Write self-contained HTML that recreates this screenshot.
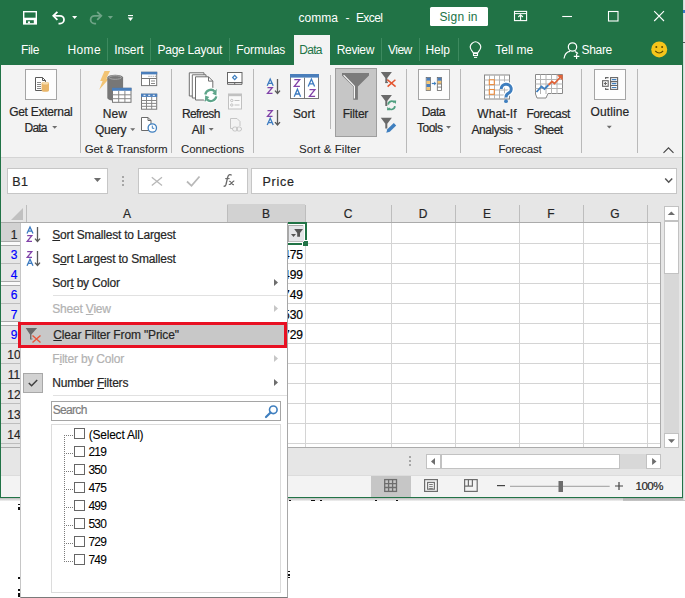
<!DOCTYPE html>
<html><head><meta charset="utf-8">
<style>
*{box-sizing:border-box;margin:0;padding:0}
html,body{width:685px;height:598px;overflow:hidden;background:#fff;font-family:"Liberation Sans",sans-serif;color:#262626}
.a{position:absolute}
.t{position:absolute;white-space:pre;line-height:1;-webkit-text-stroke-width:0.2px}
svg{position:absolute;overflow:visible}
</style></head><body>
<!-- window -->
<div class="a" style="left:0;top:0;width:683px;height:498px;background:#217346"></div>
<!-- title bar -->
<div class="t" style="-webkit-text-stroke-width:0;left:298.5px;top:12px;font-size:12px;letter-spacing:0.03px;color:#fff">comma</div>
<div class="t" style="-webkit-text-stroke-width:0;left:345.6px;top:12px;font-size:12px;color:#fff">-</div>
<div class="t" style="-webkit-text-stroke-width:0;left:355.9px;top:12px;font-size:12px;letter-spacing:-0.55px;color:#fff">Excel</div>
<svg style="left:0;top:0" width="685" height="35">
<!-- save -->
<rect x="23" y="11" width="14" height="13.6" fill="#fff"/>
<rect x="24.4" y="12.4" width="11.2" height="5.3" fill="#217346"/>
<rect x="26" y="20.2" width="7.8" height="3" fill="#217346"/>
<rect x="27.9" y="21.4" width="2.1" height="1.8" fill="#fff"/>
<!-- undo -->
<path d="M53.8,15.8 H60 A4,3.9 0 0 1 60,23.6 H58.5" fill="none" stroke="#fff" stroke-width="1.8"/>
<path d="M57.4,11.8 L53.3,15.8 L57.4,19.8" fill="none" stroke="#fff" stroke-width="1.8"/>
<polygon points="72.1,16 77.2,16 74.65,19" fill="#fff"/>
<!-- redo -->
<g opacity="0.35">
<path d="M100.8,15.8 H94.6 A4,3.9 0 0 0 94.6,23.6 H96.1" fill="none" stroke="#fff" stroke-width="1.8"/>
<path d="M97.2,11.8 L101.3,15.8 L97.2,19.8" fill="none" stroke="#fff" stroke-width="1.8"/>
<polygon points="107.8,16 113,16 110.4,19" fill="#fff"/>
</g>
<!-- customize -->
<rect x="128" y="15" width="5" height="1.1" fill="#fff"/>
<polygon points="127.8,17.6 133.2,17.6 130.5,21" fill="#fff"/>
<!-- ribbon display options -->
<rect x="514.5" y="11.4" width="12.1" height="9.2" fill="none" stroke="#fff" stroke-width="1.1"/>
<path d="M514.5,13.6 H526.6" stroke="#fff" stroke-width="1"/>
<path d="M520.6,14.6 V20.6 M518.3,17 L520.6,14.8 L522.9,17" fill="none" stroke="#fff" stroke-width="1.1"/>
<!-- min max close -->
<path d="M562.2,16.5 H572" stroke="#fff" stroke-width="1.1"/>
<rect x="608.5" y="11.5" width="9.5" height="9.5" fill="none" stroke="#fff" stroke-width="1.1"/>
<path d="M654.2,11.2 L664,21 M664,11.2 L654.2,21" stroke="#fff" stroke-width="1.1"/>
</svg>
<div class="a" style="left:430px;top:7px;width:58px;height:19px;background:#fff;border-radius:1.5px"></div>
<div class="t" style="-webkit-text-stroke-width:0;left:439.4px;top:11px;font-size:12px;letter-spacing:0.23px;color:#217346">Sign in</div>
<!-- tab separators -->
<svg style="left:0;top:0" width="685" height="65">
<g fill="#3d8a5f">
<rect x="107" y="38" width="1" height="23"/>
<rect x="150" y="38" width="1" height="23"/>
<rect x="229" y="38" width="1" height="23"/>
<rect x="381" y="38" width="1" height="23"/>
<rect x="419" y="38" width="1" height="23"/>
<rect x="458" y="38" width="1" height="23"/>
</g>
<!-- lightbulb -->
<path d="M473.3,52.8 L471.2,49.8 A5.1,5.1 0 1 1 479.8,49.8 L477.7,52.8 Z" fill="none" stroke="#fff" stroke-width="1.15"/>
<rect x="473.5" y="53.5" width="4" height="2" fill="none" stroke="#fff" stroke-width="1.1"/>
<path d="M474,57.4 H477.1" stroke="#fff" stroke-width="1"/>
<!-- share person -->
<circle cx="572.5" cy="47" r="4.2" fill="none" stroke="#fff" stroke-width="1.2"/>
<path d="M564,58.5 Q565,52 570,51.4" fill="none" stroke="#fff" stroke-width="1.2"/>
<path d="M575,51.6 Q577,52.3 578,53.6" fill="none" stroke="#fff" stroke-width="1.2"/>
<path d="M576.6,53.5 V59 M573.8,56.3 H579.4" stroke="#fff" stroke-width="1.2"/>
<!-- smiley -->
<circle cx="659.2" cy="49.4" r="8" fill="#f6c51b"/>
<circle cx="656.3" cy="47" r="1" fill="#5a4a00"/>
<circle cx="662.1" cy="47" r="1" fill="#5a4a00"/>
<path d="M655.3,51 Q659.2,55 663.1,51" fill="none" stroke="#5a4a00" stroke-width="1.1"/>
</svg>
<!-- tabs -->
<div class="a" style="left:294px;top:35px;width:36px;height:30px;background:#f3f3f3"></div>
<div class="t" style="-webkit-text-stroke-width:0;left:20.9px;top:44px;font-size:12px;letter-spacing:-0.3px;color:#fff">File</div>
<div class="t" style="-webkit-text-stroke-width:0;left:67.4px;top:44px;font-size:12px;letter-spacing:0.43px;color:#fff">Home</div>
<div class="t" style="-webkit-text-stroke-width:0;left:114.2px;top:44px;font-size:12px;letter-spacing:-0.12px;color:#fff">Insert</div>
<div class="t" style="-webkit-text-stroke-width:0;left:157.5px;top:44px;font-size:12px;letter-spacing:-0.26px;color:#fff">Page Layout</div>
<div class="t" style="-webkit-text-stroke-width:0;left:236.3px;top:44px;font-size:12px;letter-spacing:-0.14px;color:#fff">Formulas</div>
<div class="t" style="-webkit-text-stroke-width:0;left:299.3px;top:44px;font-size:12px;letter-spacing:-0.73px;color:#217346">Data</div>
<div class="t" style="-webkit-text-stroke-width:0;left:336.8px;top:44px;font-size:12px;letter-spacing:-0.36px;color:#fff">Review</div>
<div class="t" style="-webkit-text-stroke-width:0;left:387.9px;top:44px;font-size:12px;letter-spacing:-0.47px;color:#fff">View</div>
<div class="t" style="-webkit-text-stroke-width:0;left:425.5px;top:44px;font-size:12px;letter-spacing:-0.07px;color:#fff">Help</div>
<div class="t" style="-webkit-text-stroke-width:0;left:495.3px;top:44px;font-size:12px;letter-spacing:-0.02px;color:#fff">Tell me</div>
<div class="t" style="-webkit-text-stroke-width:0;left:581.6px;top:44px;font-size:12px;letter-spacing:-0.35px;color:#fff">Share</div>
<!-- ribbon -->
<div class="a" style="left:1px;top:65px;width:681px;height:93px;background:#f3f3f3;border-bottom:1px solid #d4d4d4"></div>
<!-- ribbon content -->
<svg style="left:0;top:0" width="685" height="160">
<rect x="80" y="69" width="1" height="84" fill="#b9b9b9"/>
<rect x="171" y="69" width="1" height="84" fill="#b9b9b9"/>
<rect x="253" y="69" width="1" height="84" fill="#b9b9b9"/>
<rect x="330" y="75" width="1" height="54" fill="#b9b9b9"/>
<rect x="406" y="69" width="1" height="84" fill="#b9b9b9"/>
<rect x="460" y="69" width="1" height="84" fill="#b9b9b9"/>
<rect x="581" y="69" width="1" height="84" fill="#b9b9b9"/>
<rect x="637" y="69" width="1" height="84" fill="#b9b9b9"/>
<polygon points="52.2,126 57.2,126 54.7,128.8" fill="#6d6d6d"/>
<polygon points="130.2,128.3 135.2,128.3 132.7,131.10000000000002" fill="#6d6d6d"/>
<polygon points="208.7,128 213.7,128 211.2,130.8" fill="#6d6d6d"/>
<polygon points="446,126 451,126 448.5,128.8" fill="#6d6d6d"/>
<polygon points="517,128 522,128 519.5,130.8" fill="#6d6d6d"/>
<polygon points="606.8,125.7 611.8,125.7 609.3,128.5" fill="#6d6d6d"/>
<rect x="25.5" y="69.5" width="31" height="30" fill="#fdfdfd" stroke="#a5a5a5"/>
<rect x="418.5" y="69.5" width="31" height="30" fill="#fdfdfd" stroke="#a5a5a5"/>
<rect x="594.5" y="69.5" width="31" height="30" fill="#fdfdfd" stroke="#a5a5a5"/>
<rect x="335.5" y="68.5" width="41" height="68" fill="#c6c6c6" stroke="#9e9e9e"/>
</svg>
<div class="t" style="left:9.2px;top:106px;font-size:12px;letter-spacing:-0.29px;color:#262626">Get External</div>
<div class="t" style="left:24.6px;top:122px;font-size:12px;letter-spacing:-0.87px;color:#262626">Data</div>
<div class="t" style="left:102.8px;top:108px;font-size:12px;letter-spacing:0.0px;color:#262626">New</div>
<div class="t" style="left:95.0px;top:124px;font-size:12px;letter-spacing:-0.3px;color:#262626">Query</div>
<div class="t" style="left:181.9px;top:108px;font-size:12px;letter-spacing:-0.58px;color:#262626">Refresh</div>
<div class="t" style="left:191.7px;top:124px;font-size:12px;letter-spacing:-0.05px;color:#262626">All</div>
<div class="t" style="left:292.9px;top:108px;font-size:12px;letter-spacing:-0.03px;color:#262626">Sort</div>
<div class="t" style="left:342.7px;top:108px;font-size:12px;letter-spacing:-0.2px;color:#262626">Filter</div>
<div class="t" style="left:421.7px;top:106px;font-size:12px;letter-spacing:-0.57px;color:#262626">Data</div>
<div class="t" style="left:417.1px;top:122px;font-size:12px;letter-spacing:-0.55px;color:#262626">Tools</div>
<div class="t" style="left:477.2px;top:108px;font-size:12px;letter-spacing:0.12px;color:#262626">What-If</div>
<div class="t" style="left:471.4px;top:124px;font-size:12px;letter-spacing:-0.43px;color:#262626">Analysis</div>
<div class="t" style="left:526.4px;top:108px;font-size:12px;letter-spacing:-0.39px;color:#262626">Forecast</div>
<div class="t" style="left:534.0px;top:124px;font-size:12px;letter-spacing:-0.57px;color:#262626">Sheet</div>
<div class="t" style="left:590.6px;top:106px;font-size:12px;letter-spacing:0.08px;color:#262626">Outline</div>
<div class="t" style="-webkit-text-stroke-width:0.05px;left:84.7px;top:144.4px;font-size:11.5px;letter-spacing:-0.1px;color:#262626">Get &amp; Transform</div>
<div class="t" style="-webkit-text-stroke-width:0.05px;left:180.9px;top:144.4px;font-size:11.5px;letter-spacing:-0.05px;color:#262626">Connections</div>
<div class="t" style="-webkit-text-stroke-width:0.05px;left:299.0px;top:144.4px;font-size:11.5px;letter-spacing:0.08px;color:#262626">Sort &amp; Filter</div>
<div class="t" style="-webkit-text-stroke-width:0.05px;left:498.4px;top:144.4px;font-size:11.5px;letter-spacing:-0.2px;color:#262626">Forecast</div>
<svg style="left:0;top:0" width="685" height="160">
<!-- get external data -->
<g>
<path d="M35.5,77.5 H42.5 L45.5,80.5 V90.5 H35.5 Z" fill="#fff" stroke="#5a5a5a"/>
<path d="M42.5,77.5 V80.5 H45.5" fill="none" stroke="#5a5a5a"/>
<path d="M37,82.5 H41 M37,84.5 H41 M37,86.5 H41 M37,88.5 H41" stroke="#8a8a8a"/>
<path d="M41.6,83.3 A3.7,1.6 0 0 1 49,83.3 V90.2 A3.7,1.6 0 0 1 41.6,90.2 Z" fill="#e9b66a"/>
<ellipse cx="45.3" cy="83.3" rx="3.2" ry="1.2" fill="#f6dcae"/>
</g>
<!-- new query -->
<g>
<polygon points="104.5,71 110,71 106.3,78.5 109.2,78.5 99.2,89.8 102.6,81 100.2,81" fill="#f2c474"/>
<path d="M107.3,77.5 A7.9,2.8 0 0 1 123.1,77.5 V98 A7.9,2.8 0 0 1 107.3,98 Z" fill="#777"/>
<ellipse cx="115.2" cy="77.5" rx="6.2" ry="1.8" fill="none" stroke="#a8a8a8" stroke-width="1"/>
<rect x="112.5" y="88.3" width="18.5" height="14" fill="#fff" stroke="#777"/>
<rect x="112" y="87.8" width="19.5" height="3" fill="#4a7ebb"/>
<path d="M118.7,91 V102.5 M124.9,91 V102.5 M112.5,94.8 H131 M112.5,98.7 H131" stroke="#888" stroke-width="1"/>
</g>
<!-- show queries -->
<g>
<rect x="141.5" y="72.3" width="15.2" height="13.3" fill="#fff" stroke="#777"/>
<rect x="141" y="71.8" width="16.2" height="2.6" fill="#4a7ebb"/>
<path d="M141.5,78.5 H156.7 M149.5,78.5 V85.5" stroke="#777"/>
<path d="M148.5,76.3 h1 M150.6,76.3 h1 M152.7,76.3 h1 M154.8,76.3 h1" stroke="#888"/>
<path d="M151,81 H155 M151,83.5 H155" stroke="#888"/>
</g>
<!-- from table -->
<g>
<rect x="141.5" y="94.2" width="15.2" height="15" fill="#fff" stroke="#777"/>
<rect x="141" y="93.7" width="16.2" height="3.2" fill="#4a7ebb"/>
<path d="M143.5,95.3 h2 M148.2,95.3 h2 M152.8,95.3 h2" stroke="#fff" stroke-width="1"/>
<path d="M146.5,97 V109 M151.7,97 V109 M141.5,100.5 H156.7 M141.5,103.4 H156.7 M141.5,106.3 H156.7" stroke="#888"/>
</g>
<!-- recent sources -->
<g>
<path d="M141.5,117.5 H148 L151,120.5 V130.5 H141.5 Z" fill="#fff" stroke="#6a6a6a"/>
<path d="M148,117.5 V120.5 H151" fill="none" stroke="#6a6a6a"/>
<circle cx="152.3" cy="128" r="4.2" fill="#fff" stroke="#3f7fbf" stroke-width="1.3"/>
<path d="M152.3,125.6 V128.3 H154.3" fill="none" stroke="#3f7fbf" stroke-width="1"/>
</g>
<!-- refresh all -->
<g fill="#fff" stroke="#6e6e6e" stroke-width="1">
<path d="M189.3,72.8 H204 V96 H189.3 Z"/>
<path d="M192.3,74.8 H206 V98 H192.3 Z"/>
<path d="M195.5,76.8 H208.5 L212.8,81.1 V100 H195.5 Z"/>
<path d="M208.5,76.8 V81.1 H212.8" fill="none"/>
</g>
<circle cx="210.8" cy="95.4" r="8" fill="#fff"/>
<g fill="none" stroke="#5ea58a" stroke-width="2.3">
<path d="M205.29,94.43 A5.6,5.6 0 0 1 214.76,91.44"/>
<path d="M216.31,96.37 A5.6,5.6 0 0 1 206.84,99.36"/>
</g>
<polygon points="212.34,93.69 216.76,88.79 216.40,95.40" fill="#5ea58a"/>
<polygon points="209.26,97.11 204.84,102.01 205.20,95.40" fill="#5ea58a"/>
<!-- connections -->
<g>
<rect x="227.5" y="72.5" width="14.5" height="10" fill="#fff" stroke="#666"/>
<path d="M227.5,82.5 V84.3 H242 V82.5 M234.7,82.5 V84.3" fill="none" stroke="#666"/>
<polygon points="234.7,74.6 237.6,77.5 234.7,80.4 231.8,77.5" fill="#3f7fbf"/>
<polygon points="234.7,76.3 235.9,77.5 234.7,78.7 233.5,77.5" fill="#fff"/>
</g>
<g opacity="0.55">
<rect x="228.5" y="94.2" width="13" height="14.8" fill="#fff" stroke="#999"/>
<rect x="228" y="93.7" width="14" height="2.5" fill="#999"/>
<circle cx="231.8" cy="100.5" r="1.2" fill="none" stroke="#999"/>
<circle cx="231.8" cy="105" r="1.2" fill="none" stroke="#999"/>
<path d="M234.5,100.5 H239.5 M234.5,105 H239.5" stroke="#999"/>
</g>
<g opacity="0.5" fill="none" stroke="#999">
<path d="M230.5,118.5 H237 L240,121.5 V126 M230.5,118.5 V128.5 H233"/>
<rect x="232.5" y="127" width="5" height="4" rx="2"/>
<rect x="236.5" y="127" width="5" height="4" rx="2"/>
</g>
<!-- sort small icons -->
<g fill="none" stroke-width="1.3">
<path d="M267.2,85.8 L270.2,79 L273.2,85.8 M268.4,83.4 H272" stroke="#3b7ac0"/>
<path d="M267.5,87.6 H272.3 L267.5,93.4 H272.5" stroke="#8042a8"/>
<path d="M277.5,79 V93.5 M275,90.6 L277.5,93.5 L280,90.6" stroke="#595959"/>
<path d="M267.5,110.6 H272.3 L267.5,116.4 H272.5" stroke="#8042a8"/>
<path d="M267.2,125 L270.2,118.3 L273.2,125 M268.4,122.6 H272" stroke="#3b7ac0"/>
<path d="M277.5,110 V125 M275,122.1 L277.5,125 L280,122.1" stroke="#595959"/>
</g>
<!-- sort big -->
<g>
<rect x="290.5" y="74.5" width="28" height="24" fill="#fff" stroke="#777"/>
<rect x="290" y="74" width="29" height="3.6" fill="#4a7ebb"/>
<path d="M304.5,77.6 V98.5" stroke="#777"/>
</g>
<g fill="none" stroke-width="1.3">
<path d="M294.3,79.6 H299.7 L294.3,86.3 H299.9" stroke="#8042a8"/>
<path d="M294.2,96.7 L297.4,89.2 L300.6,96.7 M295.3,94 H299.5" stroke="#3b7ac0"/>
<path d="M308.2,86.6 L311.4,79.1 L314.6,86.6 M309.3,83.9 H313.5" stroke="#3b7ac0"/>
<path d="M309.5,89.6 H314.9 L309.5,96.3 H315.1" stroke="#8042a8"/>
</g>
<!-- filter big funnel -->
<path d="M342,73.1 H369 V75.4 L357.9,86.6 V99.7 H353.3 V86.6 L342,75.4 Z" fill="#7b7b7b"/>
<path d="M343.6,75.2 L354.4,86.2 V98.6" fill="none" stroke="#fff" stroke-width="1.1"/>
<!-- small funnels -->
<g fill="#6a6a6a">
<path d="M380.8,72 H391.9 L387.3,78 V83 H385.3 V78 Z"/>
<path d="M380.8,95 H391.9 L387.3,101 V106 H385.3 V101 Z"/>
<path d="M380.8,117.8 H391.9 L387.3,123.8 V128.6 H385.3 V123.8 Z"/>
</g>
<path d="M385.3,82.6 H388" stroke="#6a6a6a" stroke-width="1"/>
<path d="M387.3,79.6 L395.6,86.6 M395.4,79.8 L387.6,86.6" stroke="#e4552f" stroke-width="1.5"/>
<g fill="none" stroke="#4f9f7f" stroke-width="1.7">
<path d="M388.2,104.6 A3.6,3.6 0 0 1 394.6,102.6"/>
<path d="M394.9,106.1 A3.6,3.6 0 0 1 388.5,108.1"/>
</g>
<polygon points="393.2,100.6 396.2,100.6 395.8,104" fill="#4f9f7f"/>
<polygon points="390,110.2 387,110.2 387.4,106.8" fill="#4f9f7f"/>
<path d="M386.3,132.8 L387.3,129.3 L393.8,123 L396.2,125.4 L389.8,131.8 Z" fill="#3f7fbf"/>
<!-- data tools -->
<g>
<rect x="426.2" y="77.4" width="4.3" height="13" fill="#fff" stroke="#666" stroke-width="0.8"/>
<rect x="426.6" y="77.8" width="3.5" height="3" fill="#4a7ebb"/>
<rect x="426.6" y="80.9" width="3.5" height="3" fill="#f2c474"/>
<rect x="426.6" y="84" width="3.5" height="3" fill="#4a7ebb"/>
<rect x="426.6" y="87.1" width="3.5" height="3" fill="#f2c474"/>
<rect x="437.3" y="77.4" width="4.3" height="13" fill="#fff" stroke="#666" stroke-width="0.8"/>
<rect x="437.7" y="77.8" width="3.5" height="3" fill="#4a7ebb"/>
<rect x="437.7" y="80.9" width="3.5" height="3" fill="#f2c474"/>
<path d="M437.5,84 H441.5 M437.5,87.1 H441.5" stroke="#666" stroke-width="0.8"/>
<path d="M431.8,83.5 H435.5" stroke="#3f7fbf" stroke-width="1.2"/>
<polygon points="434.2,81.6 436.3,83.5 434.2,85.4" fill="#3f7fbf"/>
</g>
<!-- what-if -->
<g>
<rect x="484.5" y="75" width="25" height="24" fill="#fff" stroke="#888" stroke-width="1"/>
<path d="M489.5,75 V99 M494.5,75 V99 M499.5,75 V99 M504.5,75 V99 M484.5,80 H509.5 M484.5,85 H509.5 M484.5,90 H509.5 M484.5,95 H509.5" stroke="#b4b4b4" stroke-width="1"/>
<rect x="489.3" y="79.8" width="5" height="4.8" fill="#fff" stroke="#e98a3c" stroke-width="1.1"/>
<rect x="489.3" y="89.5" width="5" height="4.8" fill="#fff" stroke="#e98a3c" stroke-width="1.1"/>
<path d="M501.2,89 A5,4.8 0 1 1 508.2,93.4 Q506,94.6 506,97.4" fill="none" stroke="#fff" stroke-width="5.5"/>
<path d="M501.2,89 A5,4.8 0 1 1 508.2,93.4 Q506,94.6 506,97.4" fill="none" stroke="#3f7fbf" stroke-width="3"/>
<circle cx="506" cy="101.2" r="1.9" fill="#3f7fbf"/>
</g>
<!-- forecast sheet -->
<g>
<path d="M535.5,74.5 H562.5 V93.5 H548 L546,98 H537 L535.5,94 Z" fill="#fff" stroke="#888" stroke-width="1"/>
<path d="M540.5,74.5 V94 M546,74.5 V94 M551.5,74.5 V94 M557,74.5 V94 M535.5,79.5 H562.5 M535.5,84 H562.5 M535.5,88.5 H562.5" stroke="#b4b4b4" stroke-width="1"/>
<path d="M536.5,92 L541.5,86.5 L544.5,89 L548.5,85" fill="none" stroke="#3f7fbf" stroke-width="1.8"/>
<path d="M548.5,85 L552,81.5 L554.5,83.5 L560.5,77" fill="none" stroke="#e0643a" stroke-width="1.8"/>
<polygon points="562.6,74.8 562.6,80.6 557,75.2" fill="#e0643a"/>
</g>
<!-- outline -->
<g fill="none" stroke="#666" stroke-width="1.1">
<rect x="602.6" y="80.7" width="5.6" height="5.6"/>
<path d="M605.4,82 V85 M603.9,83.5 H606.9"/>
<path d="M605.6,79 V77.6 H608.6 M605.6,88 V89.4 H608.6"/>
<rect x="610.6" y="77.6" width="7" height="11.8"/>
<path d="M610.6,81.6 H617.6 M610.6,85.5 H617.6"/>
</g>
<path d="M612.3,79.6 H616 M612.3,83.6 H616 M612.3,87.5 H616" stroke="#3f7fbf" stroke-width="1.1" stroke-linecap="round"/>
<!-- collapse -->
<path d="M663.5,152.8 L668.5,147.8 L673.5,152.8" fill="none" stroke="#444" stroke-width="1.1"/>
</svg>
<!-- formula bar area -->
<div class="a" style="left:1px;top:158px;width:681px;height:46px;background:#e6e6e6"></div>
<div class="a" style="left:7px;top:168px;width:101px;height:26px;background:#fff;border:1px solid #c6c6c6"></div>
<div class="t" style="left:12.3px;top:176px;font-size:12.5px;letter-spacing:0.3px;color:#262626">B1</div>
<div class="a" style="left:138px;top:168px;width:110px;height:26px;background:#fff;border:1px solid #c6c6c6"></div>
<div class="a" style="left:251px;top:168px;width:426px;height:26px;background:#fff;border:1px solid #c6c6c6"></div>
<div class="t" style="left:262.4px;top:176px;font-size:12.5px;letter-spacing:0.75px;color:#262626">Price</div>
<!-- sheet -->
<div class="a" style="left:1px;top:204px;width:681px;height:271px;background:#e6e6e6"></div>
<div class="a" style="left:27px;top:223px;width:634px;height:225px;background:#fff"></div>
<!-- status bar -->
<div class="a" style="left:1px;top:475px;width:681px;height:22px;background:#f3f3f3"></div>
<svg class="a" style="left:0;top:0" width="685" height="598" shape-rendering="crispEdges">
<rect x="227" y="204" width="78" height="19" fill="#d2d2d2"/>
<rect x="1" y="223" width="26" height="19" fill="#d2d2d2"/>
<rect x="26" y="205" width="1" height="18" fill="#bdbdbd"/>
<rect x="227" y="205" width="1" height="18" fill="#bdbdbd"/>
<rect x="305" y="205" width="1" height="18" fill="#bdbdbd"/>
<rect x="391" y="205" width="1" height="18" fill="#bdbdbd"/>
<rect x="455" y="205" width="1" height="18" fill="#bdbdbd"/>
<rect x="519" y="205" width="1" height="18" fill="#bdbdbd"/>
<rect x="583" y="205" width="1" height="18" fill="#bdbdbd"/>
<rect x="647" y="205" width="1" height="18" fill="#bdbdbd"/>
<rect x="1" y="222" width="660" height="1" fill="#ababab"/>
<rect x="26" y="223" width="1" height="225" fill="#ababab"/>
<rect x="227" y="223" width="1" height="224" fill="#d4d4d4"/>
<rect x="305" y="223" width="1" height="224" fill="#d4d4d4"/>
<rect x="391" y="223" width="1" height="224" fill="#d4d4d4"/>
<rect x="455" y="223" width="1" height="224" fill="#d4d4d4"/>
<rect x="519" y="223" width="1" height="224" fill="#d4d4d4"/>
<rect x="583" y="223" width="1" height="224" fill="#d4d4d4"/>
<rect x="647" y="223" width="1" height="224" fill="#d4d4d4"/>
<rect x="27" y="243" width="633" height="1" fill="#d4d4d4"/>
<rect x="27" y="263" width="633" height="1" fill="#d4d4d4"/>
<rect x="27" y="283" width="633" height="1" fill="#d4d4d4"/>
<rect x="27" y="303" width="633" height="1" fill="#d4d4d4"/>
<rect x="27" y="323" width="633" height="1" fill="#d4d4d4"/>
<rect x="27" y="343" width="633" height="1" fill="#d4d4d4"/>
<rect x="27" y="363" width="633" height="1" fill="#d4d4d4"/>
<rect x="27" y="383" width="633" height="1" fill="#d4d4d4"/>
<rect x="27" y="403" width="633" height="1" fill="#d4d4d4"/>
<rect x="27" y="423" width="633" height="1" fill="#d4d4d4"/>
<rect x="27" y="443" width="633" height="1" fill="#d4d4d4"/>
<rect x="1" y="263" width="25" height="1" fill="#bdbdbd"/>
<rect x="1" y="303" width="25" height="1" fill="#bdbdbd"/>
<rect x="1" y="343" width="25" height="1" fill="#bdbdbd"/>
<rect x="1" y="363" width="25" height="1" fill="#bdbdbd"/>
<rect x="1" y="383" width="25" height="1" fill="#bdbdbd"/>
<rect x="1" y="403" width="25" height="1" fill="#bdbdbd"/>
<rect x="1" y="423" width="25" height="1" fill="#bdbdbd"/>
<rect x="1" y="443" width="25" height="1" fill="#bdbdbd"/>
<rect x="1" y="241" width="25" height="1" fill="#ababab"/>
<rect x="1" y="242" width="25" height="3" fill="#fafafa"/>
<rect x="1" y="245" width="25" height="1" fill="#ababab"/>
<rect x="1" y="281" width="25" height="1" fill="#ababab"/>
<rect x="1" y="282" width="25" height="3" fill="#fafafa"/>
<rect x="1" y="285" width="25" height="1" fill="#ababab"/>
<rect x="1" y="321" width="25" height="1" fill="#ababab"/>
<rect x="1" y="322" width="25" height="3" fill="#fafafa"/>
<rect x="1" y="325" width="25" height="1" fill="#ababab"/>
<rect x="660" y="223" width="1" height="225" fill="#ababab"/>
<rect x="1" y="447" width="660" height="1" fill="#ababab"/>
<polygon points="23,208 23,220 11,220" fill="#c0c0c0" shape-rendering="auto"/>
</svg>
<div class="t" style="left:27px;width:200px;text-align:center;top:208px;font-size:12px;color:#262626">A</div>
<div class="t" style="left:227px;width:78px;text-align:center;top:208px;font-size:12px;color:#262626">B</div>
<div class="t" style="left:305px;width:86px;text-align:center;top:208px;font-size:12px;color:#262626">C</div>
<div class="t" style="left:391px;width:64px;text-align:center;top:208px;font-size:12px;color:#262626">D</div>
<div class="t" style="left:455px;width:64px;text-align:center;top:208px;font-size:12px;color:#262626">E</div>
<div class="t" style="left:519px;width:64px;text-align:center;top:208px;font-size:12px;color:#262626">F</div>
<div class="t" style="left:583px;width:64px;text-align:center;top:208px;font-size:12px;color:#262626">G</div>
<div class="t" style="left:1px;width:26px;text-align:center;top:229px;font-size:12px;color:#262626">1</div>
<div class="t" style="left:1px;width:26px;text-align:center;top:249px;font-size:12px;color:#0000ff">3</div>
<div class="t" style="left:1px;width:26px;text-align:center;top:269px;font-size:12px;color:#0000ff">4</div>
<div class="t" style="left:1px;width:26px;text-align:center;top:289px;font-size:12px;color:#0000ff">6</div>
<div class="t" style="left:1px;width:26px;text-align:center;top:309px;font-size:12px;color:#0000ff">7</div>
<div class="t" style="left:1px;width:26px;text-align:center;top:329px;font-size:12px;color:#0000ff">9</div>
<div class="t" style="left:1px;width:26px;text-align:center;top:349px;font-size:12px;color:#262626">10</div>
<div class="t" style="left:1px;width:26px;text-align:center;top:369px;font-size:12px;color:#262626">11</div>
<div class="t" style="left:1px;width:26px;text-align:center;top:389px;font-size:12px;color:#262626">12</div>
<div class="t" style="left:1px;width:26px;text-align:center;top:409px;font-size:12px;color:#262626">13</div>
<div class="t" style="left:1px;width:26px;text-align:center;top:429px;font-size:12px;color:#262626">14</div>
<div class="t" style="left:227px;width:76px;text-align:right;top:249px;font-size:12px;color:#000">475</div>
<div class="t" style="left:227px;width:76px;text-align:right;top:269px;font-size:12px;color:#000">499</div>
<div class="t" style="left:227px;width:76px;text-align:right;top:289px;font-size:12px;color:#000">749</div>
<div class="t" style="left:227px;width:76px;text-align:right;top:309px;font-size:12px;color:#000">530</div>
<div class="t" style="left:227px;width:76px;text-align:right;top:329px;font-size:12px;color:#000">729</div>
<!-- selection -->
<svg style="left:0;top:0" width="685" height="598" shape-rendering="crispEdges">
<rect x="288" y="222" width="19" height="2" fill="#217346"/>
<rect x="305" y="222" width="2" height="18" fill="#217346"/>
<rect x="288" y="243" width="14" height="2" fill="#217346"/>
<rect x="302" y="240" width="6" height="6" fill="#fff"/>
<rect x="303" y="241" width="5" height="5" fill="#217346"/>
<rect x="288" y="225" width="16" height="17" fill="#e4e5e8"/>
<rect x="288" y="225" width="15" height="1" fill="#a8a8a8"/>
<rect x="288" y="241" width="15" height="1" fill="#bdbdbd"/>
<rect x="288" y="225" width="1" height="17" fill="#a8a8a8"/>
</svg>
<svg style="left:0;top:0" width="685" height="598">
<path d="M294.2,229 H303 L300,233 V236.7 H297.2 V233 Z" fill="#555"/>
<polygon points="291,234 296,234 293.5,237" fill="#555"/>
</svg>
<!-- formula icons -->
<svg style="left:0;top:0" width="685" height="200">
<polygon points="93.9,178 101,178 97.45,182" fill="#6d6d6d"/>
<rect x="122" y="176" width="2" height="2" fill="#a6a6a6"/>
<rect x="122" y="180" width="2" height="2" fill="#a6a6a6"/>
<rect x="122" y="184" width="2" height="2" fill="#a6a6a6"/>
<path d="M151.8,177.3 L162,185.5 M162,177.3 L151.8,185.5" stroke="#b8b8b8" stroke-width="1.3"/>
<path d="M187,181.5 L191.5,185.8 L199.5,176.5" fill="none" stroke="#b8b8b8" stroke-width="1.8"/>
</svg>
<svg style="left:0;top:0" width="685" height="200">
<path d="M231.6,175.4 Q230.8,174.3 229.6,174.6 Q228.2,175 227.6,177.5 L226,184.5 Q225.4,186.6 223.6,186.2" fill="none" stroke="#6a6a6a" stroke-width="1.3"/>
<path d="M665.2,178.6 L668.7,182.2 L672.2,178.6" fill="none" stroke="#555" stroke-width="1.5"/>
<path d="M225.2,178.6 H229.6" stroke="#6a6a6a" stroke-width="1.1"/>
<path d="M229,181.4 Q230,180.8 230.8,182 L232.4,184.2 Q233,184.9 233.9,184.5 M234.3,181.2 Q233.6,180.9 232.6,182 L230.6,184 Q229.9,184.7 228.8,184.4" fill="none" stroke="#6a6a6a" stroke-width="1.1"/>
</svg>
<!-- scrollbars -->
<svg style="left:0;top:0" width="685" height="598" shape-rendering="crispEdges">
<rect x="664" y="274" width="15" height="159" fill="#d8d8d8"/>
<rect x="664.5" y="206.5" width="14" height="14" fill="#fff" stroke="#c2c2c2"/>
<rect x="664.5" y="221.5" width="14" height="52" fill="#fff" stroke="#c2c2c2"/>
<rect x="664.5" y="433.5" width="14" height="14" fill="#fff" stroke="#c2c2c2"/>
<rect x="620" y="454" width="26" height="15" fill="#d8d8d8"/>
<rect x="426.5" y="454.5" width="14" height="14" fill="#fff" stroke="#c2c2c2"/>
<rect x="441.5" y="454.5" width="178" height="14" fill="#fff" stroke="#c2c2c2"/>
<rect x="646.5" y="454.5" width="14" height="14" fill="#fff" stroke="#c2c2c2"/>
<rect x="409" y="456" width="2" height="2" fill="#a6a6a6"/>
<rect x="409" y="460" width="2" height="2" fill="#a6a6a6"/>
<rect x="409" y="464" width="2" height="2" fill="#a6a6a6"/>
<rect x="1" y="475" width="681" height="1" fill="#dcdcdc"/>
<rect x="371" y="476" width="40" height="21" fill="#c6c6c6"/>
</svg>
<svg style="left:0;top:0" width="685" height="598">
<polygon points="667.7,215 675,215 671.35,211.4" fill="#6d6d6d"/>
<polygon points="668,439.3 675,439.3 671.5,443" fill="#6d6d6d"/>
<polygon points="435,457.9 435,465 431,461.45" fill="#6d6d6d"/>
<polygon points="652.1,457.9 652.1,465 656.5,461.45" fill="#6d6d6d"/>
<!-- status icons -->
<g fill="none" stroke="#6d6d6d" stroke-width="1.3">
<rect x="384.7" y="479.6" width="11.8" height="11.8"/>
<path d="M388.6,479.6 V491.4 M392.6,479.6 V491.4 M384.7,483.6 H396.5 M384.7,487.5 H396.5"/>
<rect x="424.6" y="479.6" width="12.8" height="11.8" stroke-width="1.2"/>
<rect x="427.6" y="482.4" width="6.8" height="6.8" stroke-width="1.1"/>
<path d="M429.2,484.5 H432.8 M429.2,486.6 H432.8 M429.2,488.6 H432.8" stroke-width="0.9"/>
<rect x="464.6" y="479.6" width="12.6" height="11.8" stroke-width="1.2"/>
<path d="M464.6,486.2 H472.4 V479.6 M468.4,479.6 V486.2" stroke-width="1.2"/>
</g>
<path d="M497,485.6 H505" stroke="#444" stroke-width="1.2"/>
<path d="M510,486.3 H609.7" stroke="#9d9d9d" stroke-width="1"/>
<rect x="558.5" y="481" width="4.5" height="11" fill="#6d6d6d"/>
<path d="M615,486 H623 M619,482 V490" stroke="#444" stroke-width="1.2"/>
</svg>
<div class="t" style="left:635.6px;top:481px;font-size:11.5px;letter-spacing:-0.53px;color:#262626">100%</div>
<!-- below window shadow -->
<div class="a" style="left:0;top:498px;width:685px;height:3px;background:linear-gradient(#bcbcbc,#dedede 66%,#f4f4f4)"></div>
<div class="a" style="left:623px;top:498px;width:62px;height:3px;background:linear-gradient(#a8a8a8,#c8c8c8)"></div>
<svg style="left:0;top:0" width="685" height="598" shape-rendering="crispEdges">
<g fill="#111">
<rect x="289" y="500" width="2" height="1"/><rect x="311" y="500" width="4" height="1"/><rect x="320" y="500" width="2" height="1"/>
<rect x="375" y="500" width="2" height="1"/><rect x="396" y="500" width="2" height="1"/>
<rect x="18" y="504" width="2" height="1"/><rect x="18" y="507" width="2" height="3"/>
<rect x="18" y="577" width="2" height="2"/><rect x="18" y="589" width="2" height="2"/><rect x="18" y="593" width="2" height="4"/>
<rect x="288" y="571" width="2" height="1"/><rect x="288" y="574" width="2" height="2"/><rect x="288" y="577" width="2" height="1"/>
</g>
</svg>
<div class="a" style="left:683px;top:0;width:2px;height:500px;background:linear-gradient(90deg,#cfcfcf,#efefef)"></div>
<div class="a" style="left:683px;top:10px;width:2px;height:3px;background:#3b78c4"></div>
<div class="a" style="left:683px;top:42px;width:2px;height:1px;background:#555"></div>
<!-- dropdown menu -->
<div class="a" style="left:20px;top:223px;width:268px;height:375px;background:#fff;border-left:1px solid #c6c6c6;border-right:1px solid #a8a8a8;border-bottom:1px solid #7a7a7a"></div>
<div class="a" style="left:18px;top:322px;width:269px;height:26px;border:3px solid #e81123;background:#c8c8c8"></div>
<div class="t" style="left:52.3px;top:229px;font-size:12px;letter-spacing:-0.2px;color:#262626"><u>S</u>ort Smallest to Largest</div>
<div class="t" style="left:52.3px;top:253px;font-size:12px;letter-spacing:-0.2px;color:#262626">S<u>o</u>rt Largest to Smallest</div>
<div class="t" style="left:52.3px;top:277px;font-size:12px;letter-spacing:-0.2px;color:#262626">Sor<u>t</u> by Color</div>
<div class="a" style="left:53px;top:295px;width:234px;height:1px;background:#e1e1e1"></div>
<div class="t" style="left:52.3px;top:303px;font-size:12px;letter-spacing:-0.2px;color:#b2b2b2">Sheet <u>V</u>iew</div>
<div class="t" style="left:53.3px;top:329px;font-size:12px;letter-spacing:-0.15px;color:#262626"><u>C</u>lear Filter From "Price"</div>
<div class="t" style="left:52.3px;top:353px;font-size:12px;letter-spacing:-0.2px;color:#b2b2b2">F<u>i</u>lter by Color</div>
<div class="t" style="left:52.3px;top:377px;font-size:12px;letter-spacing:-0.2px;color:#262626">Number <u>F</u>ilters</div>
<div class="a" style="left:53px;top:395px;width:234px;height:1px;background:#e1e1e1"></div>
<svg style="left:274px;top:279px" width="5" height="8"><polygon points="0,0 4,3.5 0,7" fill="#6d6d6d"/></svg>
<svg style="left:274px;top:305px" width="5" height="8"><polygon points="0,0 4,3.5 0,7" fill="#c6c6c6"/></svg>
<svg style="left:274px;top:355px" width="5" height="8"><polygon points="0,0 4,3.5 0,7" fill="#c6c6c6"/></svg>
<svg style="left:274px;top:379px" width="5" height="8"><polygon points="0,0 4,3.5 0,7" fill="#6d6d6d"/></svg>
<svg style="left:0;top:0" width="60" height="400">
<g fill="none" stroke-width="1.3">
<path d="M27,233.6 L30,227 L33,233.6 M28.2,231.2 H31.8" stroke="#3b7ac0"/>
<path d="M27.2,235.6 H31.8 L27.2,241.4 H32" stroke="#8042a8"/>
<path d="M37.5,227 V241.5 M35,238.6 L37.5,241.5 L40,238.6" stroke="#595959"/>
<path d="M27.2,251.6 H31.8 L27.2,257.4 H32" stroke="#8042a8"/>
<path d="M27,265.8 L30,259.2 L33,265.8 M28.2,263.4 H31.8" stroke="#3b7ac0"/>
<path d="M37.5,251 V265.5 M35,262.6 L37.5,265.5 L40,262.6" stroke="#595959"/>
</g>
<path d="M25.7,328 H37.1 L31.4,334.4 V338.8 H33.2 L32,339.6 H30 V334.4 Z" fill="#6a6a6a"/>
<path d="M32.5,335.5 L40.5,342.5 M40.5,335.5 L32.5,342.5" stroke="#e8553a" stroke-width="1.4"/>
<rect x="23.5" y="373.5" width="19" height="19" fill="#d2d2d2" stroke="#a8a8a8"/>
<path d="M28.8,383 L31.6,385.8 L37.2,380" fill="none" stroke="#404040" stroke-width="1.5"/>
</svg>
<div class="a" style="left:51px;top:401px;width:230px;height:20px;background:#fff;border:1px solid #a5a5a5"></div>
<div class="t" style="left:52.7px;top:404px;font-size:12px;letter-spacing:-0.68px;color:#7d7d7d">Search</div>
<svg style="left:264px;top:404px" width="16" height="14"><circle cx="9.3" cy="5.8" r="3.8" fill="none" stroke="#3f7fbf" stroke-width="1.6"/><path d="M6.6,8.5 L2,13" stroke="#3f7fbf" stroke-width="2.2" stroke-linecap="round"/></svg>
<div class="a" style="left:51px;top:424px;width:230px;height:169px;background:#fff;border:1px solid #dcdcdc"></div>
<svg style="left:0;top:0" width="300" height="598" shape-rendering="crispEdges">
<rect x="74.5" y="428.5" width="10" height="10" fill="#fff" stroke="#666"/>
<rect x="66" y="435" width="1" height="1" fill="#7a7a7a"/>
<rect x="68" y="435" width="1" height="1" fill="#7a7a7a"/>
<rect x="70" y="435" width="1" height="1" fill="#7a7a7a"/>
<rect x="72" y="435" width="1" height="1" fill="#7a7a7a"/>
<rect x="74.5" y="446.5" width="10" height="10" fill="#fff" stroke="#666"/>
<rect x="66" y="453" width="1" height="1" fill="#7a7a7a"/>
<rect x="68" y="453" width="1" height="1" fill="#7a7a7a"/>
<rect x="70" y="453" width="1" height="1" fill="#7a7a7a"/>
<rect x="72" y="453" width="1" height="1" fill="#7a7a7a"/>
<rect x="74.5" y="464.5" width="10" height="10" fill="#fff" stroke="#666"/>
<rect x="66" y="471" width="1" height="1" fill="#7a7a7a"/>
<rect x="68" y="471" width="1" height="1" fill="#7a7a7a"/>
<rect x="70" y="471" width="1" height="1" fill="#7a7a7a"/>
<rect x="72" y="471" width="1" height="1" fill="#7a7a7a"/>
<rect x="74.5" y="482.5" width="10" height="10" fill="#fff" stroke="#666"/>
<rect x="66" y="489" width="1" height="1" fill="#7a7a7a"/>
<rect x="68" y="489" width="1" height="1" fill="#7a7a7a"/>
<rect x="70" y="489" width="1" height="1" fill="#7a7a7a"/>
<rect x="72" y="489" width="1" height="1" fill="#7a7a7a"/>
<rect x="74.5" y="500.5" width="10" height="10" fill="#fff" stroke="#666"/>
<rect x="66" y="507" width="1" height="1" fill="#7a7a7a"/>
<rect x="68" y="507" width="1" height="1" fill="#7a7a7a"/>
<rect x="70" y="507" width="1" height="1" fill="#7a7a7a"/>
<rect x="72" y="507" width="1" height="1" fill="#7a7a7a"/>
<rect x="74.5" y="518.5" width="10" height="10" fill="#fff" stroke="#666"/>
<rect x="66" y="525" width="1" height="1" fill="#7a7a7a"/>
<rect x="68" y="525" width="1" height="1" fill="#7a7a7a"/>
<rect x="70" y="525" width="1" height="1" fill="#7a7a7a"/>
<rect x="72" y="525" width="1" height="1" fill="#7a7a7a"/>
<rect x="74.5" y="536.5" width="10" height="10" fill="#fff" stroke="#666"/>
<rect x="66" y="543" width="1" height="1" fill="#7a7a7a"/>
<rect x="68" y="543" width="1" height="1" fill="#7a7a7a"/>
<rect x="70" y="543" width="1" height="1" fill="#7a7a7a"/>
<rect x="72" y="543" width="1" height="1" fill="#7a7a7a"/>
<rect x="74.5" y="554.5" width="10" height="10" fill="#fff" stroke="#666"/>
<rect x="66" y="561" width="1" height="1" fill="#7a7a7a"/>
<rect x="68" y="561" width="1" height="1" fill="#7a7a7a"/>
<rect x="70" y="561" width="1" height="1" fill="#7a7a7a"/>
<rect x="72" y="561" width="1" height="1" fill="#7a7a7a"/>
<rect x="64" y="435" width="1" height="1" fill="#7a7a7a"/>
<rect x="64" y="437" width="1" height="1" fill="#7a7a7a"/>
<rect x="64" y="439" width="1" height="1" fill="#7a7a7a"/>
<rect x="64" y="441" width="1" height="1" fill="#7a7a7a"/>
<rect x="64" y="443" width="1" height="1" fill="#7a7a7a"/>
<rect x="64" y="445" width="1" height="1" fill="#7a7a7a"/>
<rect x="64" y="447" width="1" height="1" fill="#7a7a7a"/>
<rect x="64" y="449" width="1" height="1" fill="#7a7a7a"/>
<rect x="64" y="451" width="1" height="1" fill="#7a7a7a"/>
<rect x="64" y="453" width="1" height="1" fill="#7a7a7a"/>
<rect x="64" y="455" width="1" height="1" fill="#7a7a7a"/>
<rect x="64" y="457" width="1" height="1" fill="#7a7a7a"/>
<rect x="64" y="459" width="1" height="1" fill="#7a7a7a"/>
<rect x="64" y="461" width="1" height="1" fill="#7a7a7a"/>
<rect x="64" y="463" width="1" height="1" fill="#7a7a7a"/>
<rect x="64" y="465" width="1" height="1" fill="#7a7a7a"/>
<rect x="64" y="467" width="1" height="1" fill="#7a7a7a"/>
<rect x="64" y="469" width="1" height="1" fill="#7a7a7a"/>
<rect x="64" y="471" width="1" height="1" fill="#7a7a7a"/>
<rect x="64" y="473" width="1" height="1" fill="#7a7a7a"/>
<rect x="64" y="475" width="1" height="1" fill="#7a7a7a"/>
<rect x="64" y="477" width="1" height="1" fill="#7a7a7a"/>
<rect x="64" y="479" width="1" height="1" fill="#7a7a7a"/>
<rect x="64" y="481" width="1" height="1" fill="#7a7a7a"/>
<rect x="64" y="483" width="1" height="1" fill="#7a7a7a"/>
<rect x="64" y="485" width="1" height="1" fill="#7a7a7a"/>
<rect x="64" y="487" width="1" height="1" fill="#7a7a7a"/>
<rect x="64" y="489" width="1" height="1" fill="#7a7a7a"/>
<rect x="64" y="491" width="1" height="1" fill="#7a7a7a"/>
<rect x="64" y="493" width="1" height="1" fill="#7a7a7a"/>
<rect x="64" y="495" width="1" height="1" fill="#7a7a7a"/>
<rect x="64" y="497" width="1" height="1" fill="#7a7a7a"/>
<rect x="64" y="499" width="1" height="1" fill="#7a7a7a"/>
<rect x="64" y="501" width="1" height="1" fill="#7a7a7a"/>
<rect x="64" y="503" width="1" height="1" fill="#7a7a7a"/>
<rect x="64" y="505" width="1" height="1" fill="#7a7a7a"/>
<rect x="64" y="507" width="1" height="1" fill="#7a7a7a"/>
<rect x="64" y="509" width="1" height="1" fill="#7a7a7a"/>
<rect x="64" y="511" width="1" height="1" fill="#7a7a7a"/>
<rect x="64" y="513" width="1" height="1" fill="#7a7a7a"/>
<rect x="64" y="515" width="1" height="1" fill="#7a7a7a"/>
<rect x="64" y="517" width="1" height="1" fill="#7a7a7a"/>
<rect x="64" y="519" width="1" height="1" fill="#7a7a7a"/>
<rect x="64" y="521" width="1" height="1" fill="#7a7a7a"/>
<rect x="64" y="523" width="1" height="1" fill="#7a7a7a"/>
<rect x="64" y="525" width="1" height="1" fill="#7a7a7a"/>
<rect x="64" y="527" width="1" height="1" fill="#7a7a7a"/>
<rect x="64" y="529" width="1" height="1" fill="#7a7a7a"/>
<rect x="64" y="531" width="1" height="1" fill="#7a7a7a"/>
<rect x="64" y="533" width="1" height="1" fill="#7a7a7a"/>
<rect x="64" y="535" width="1" height="1" fill="#7a7a7a"/>
<rect x="64" y="537" width="1" height="1" fill="#7a7a7a"/>
<rect x="64" y="539" width="1" height="1" fill="#7a7a7a"/>
<rect x="64" y="541" width="1" height="1" fill="#7a7a7a"/>
<rect x="64" y="543" width="1" height="1" fill="#7a7a7a"/>
<rect x="64" y="545" width="1" height="1" fill="#7a7a7a"/>
<rect x="64" y="547" width="1" height="1" fill="#7a7a7a"/>
<rect x="64" y="549" width="1" height="1" fill="#7a7a7a"/>
<rect x="64" y="551" width="1" height="1" fill="#7a7a7a"/>
<rect x="64" y="553" width="1" height="1" fill="#7a7a7a"/>
<rect x="64" y="555" width="1" height="1" fill="#7a7a7a"/>
<rect x="64" y="557" width="1" height="1" fill="#7a7a7a"/>
<rect x="64" y="559" width="1" height="1" fill="#7a7a7a"/>
<rect x="64" y="561" width="1" height="1" fill="#7a7a7a"/>
</svg>
<div class="t" style="-webkit-text-stroke-width:0.08px;left:88.7px;top:429px;font-size:12px;letter-spacing:-0.22px;color:#000">(Select All)</div>
<div class="t" style="-webkit-text-stroke-width:0.08px;left:88.4px;top:446px;font-size:12px;letter-spacing:-0.75px;color:#000">219</div>
<div class="t" style="-webkit-text-stroke-width:0.08px;left:88.4px;top:464px;font-size:12px;letter-spacing:-0.75px;color:#000">350</div>
<div class="t" style="-webkit-text-stroke-width:0.08px;left:88.4px;top:482px;font-size:12px;letter-spacing:-0.75px;color:#000">475</div>
<div class="t" style="-webkit-text-stroke-width:0.08px;left:88.4px;top:500px;font-size:12px;letter-spacing:-0.75px;color:#000">499</div>
<div class="t" style="-webkit-text-stroke-width:0.08px;left:88.4px;top:518px;font-size:12px;letter-spacing:-0.75px;color:#000">530</div>
<div class="t" style="-webkit-text-stroke-width:0.08px;left:88.4px;top:536px;font-size:12px;letter-spacing:-0.75px;color:#000">729</div>
<div class="t" style="-webkit-text-stroke-width:0.08px;left:88.4px;top:554px;font-size:12px;letter-spacing:-0.75px;color:#000">749</div>
</body></html>
